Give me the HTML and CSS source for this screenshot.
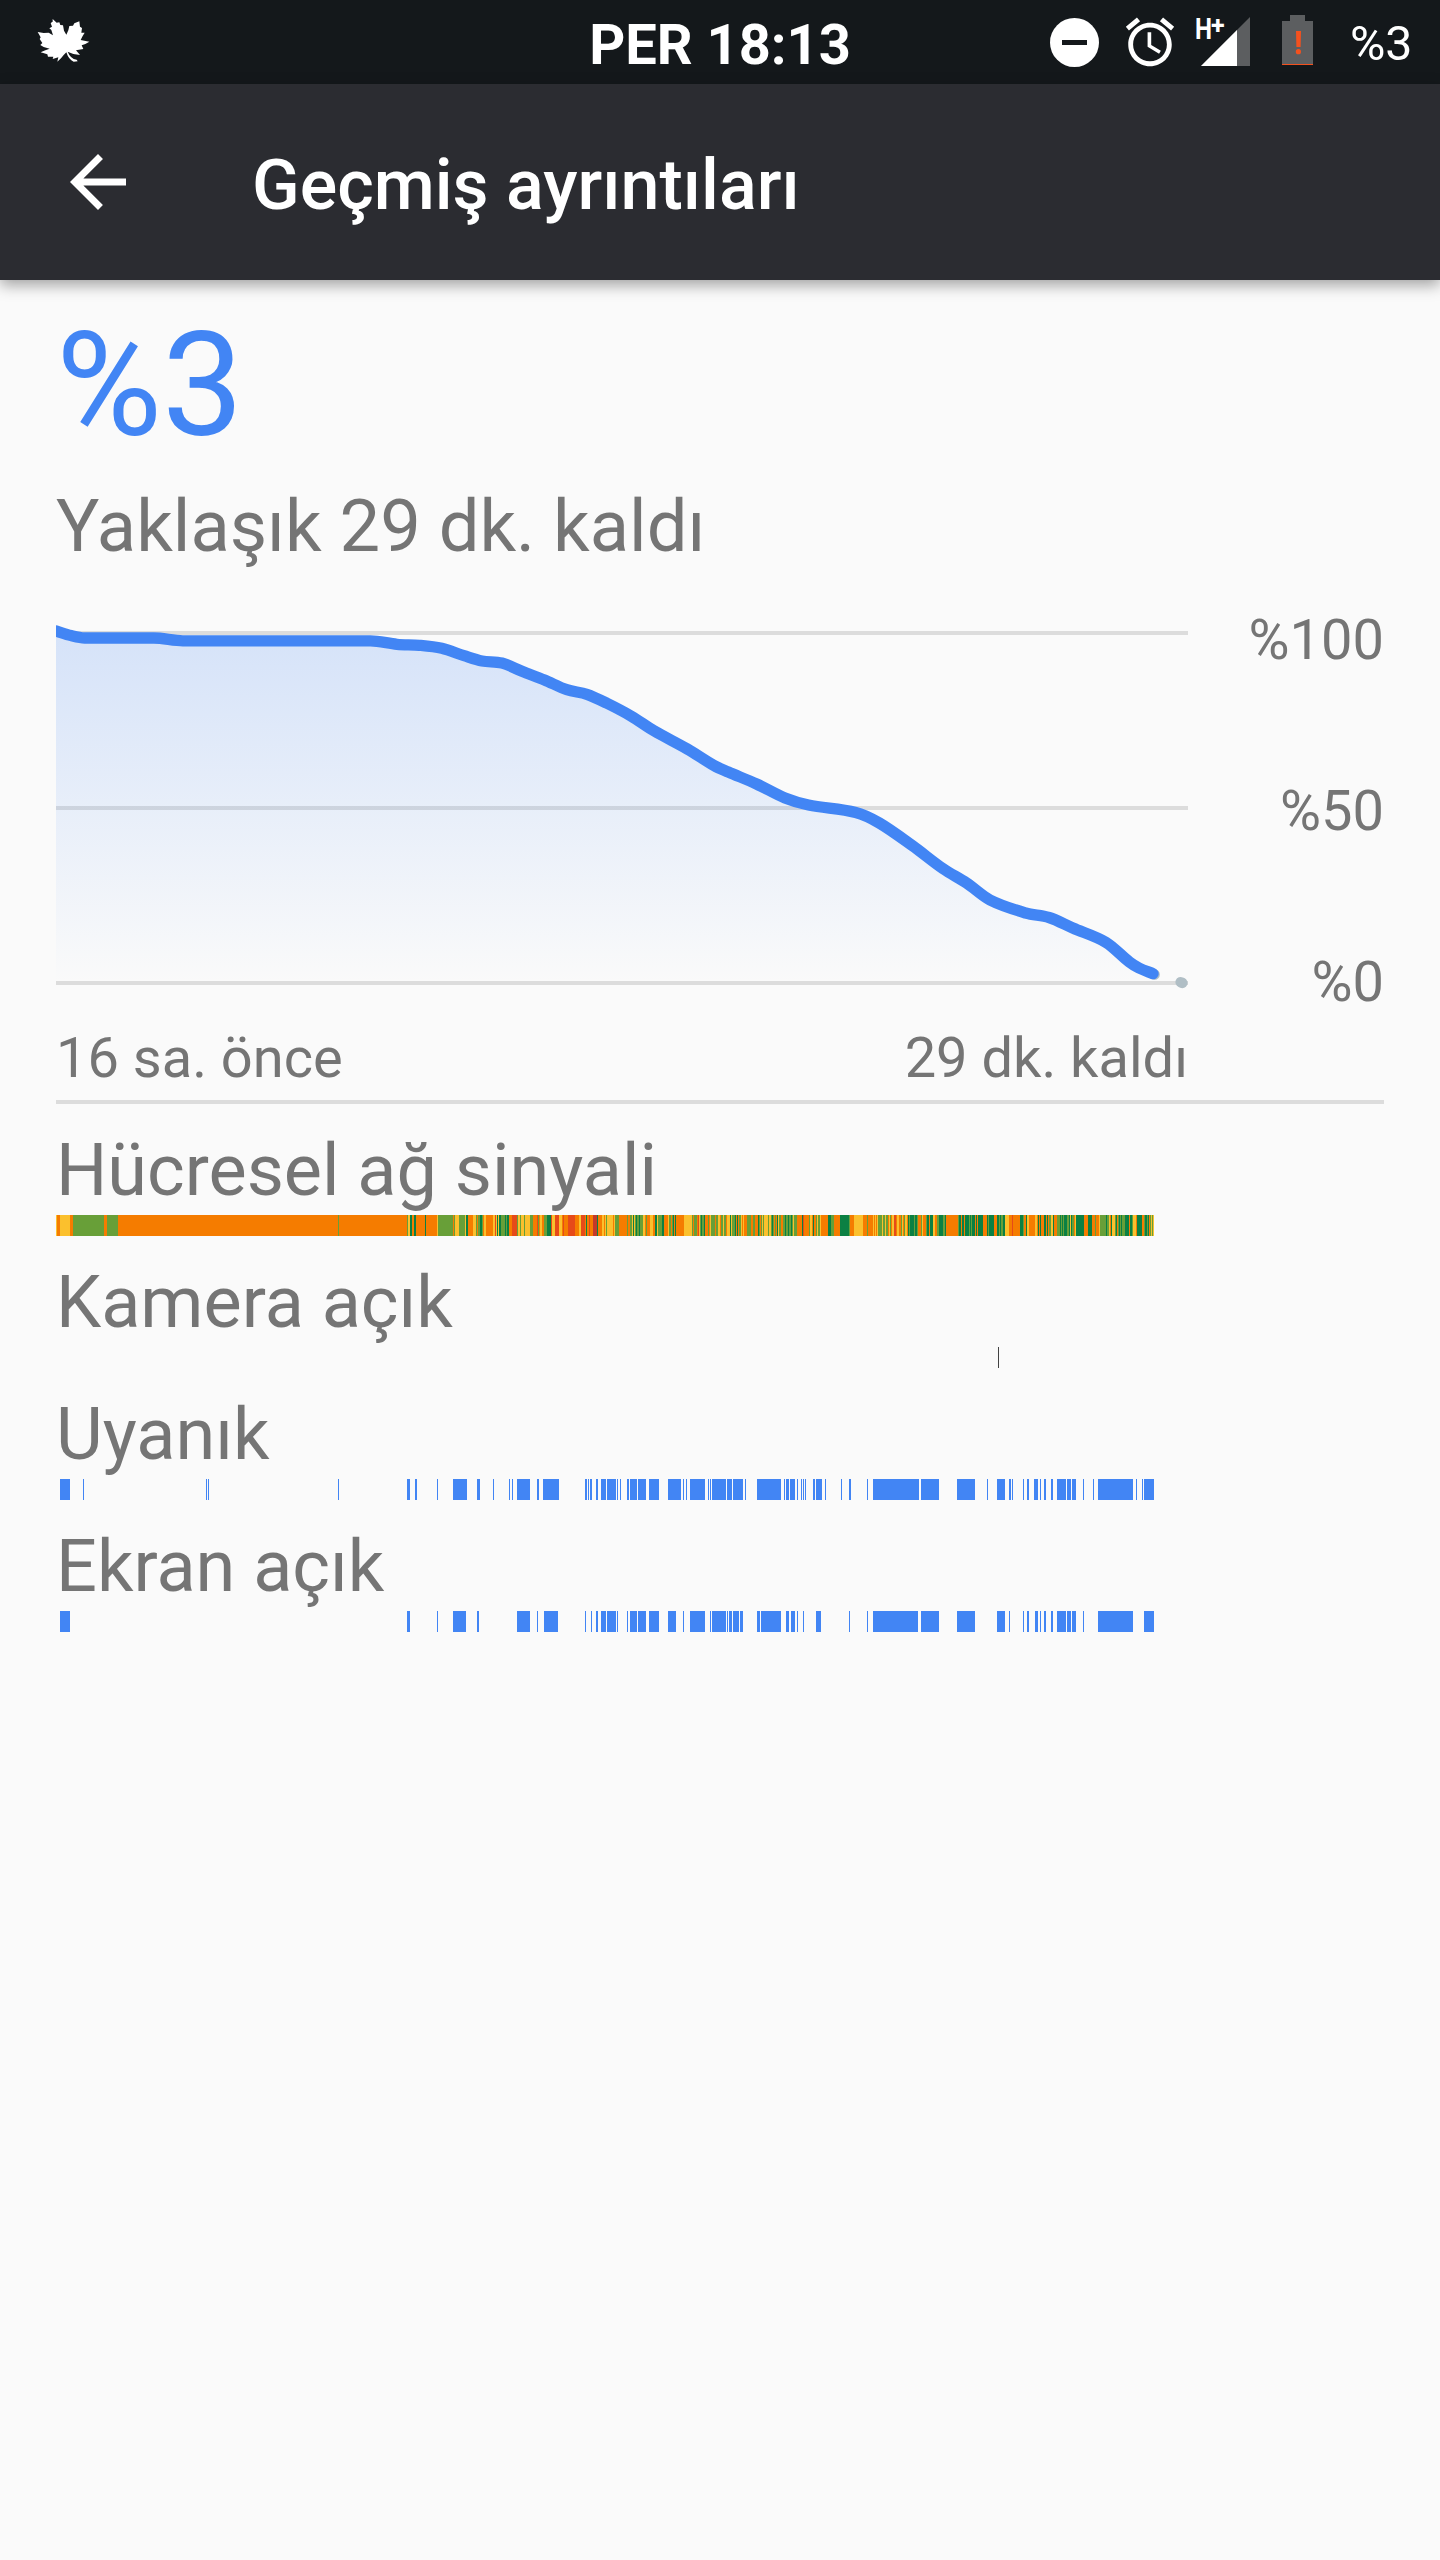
FILE: index.html
```html
<!DOCTYPE html>
<html lang="tr">
<head>
  <meta charset="UTF-8">
  <meta name="viewport" content="width=device-width, initial-scale=1.0">
  <title>Geçmiş ayrıntıları</title>
  <link rel="stylesheet" href="styles.css">
</head>
<body>
  <div class="status-bar">
    <div class="status-left">
      <svg class="leaf" viewBox="105 50 168 150" width="56" height="50">
        <path fill="#fff" d="M158 56l12 11 8-1 3 8 8 1 3 16 7 12 6-13 3-13 11-1 4-7 15-6 2 16 6 4-2 14 10 0-6 10-6 12 26 5-12 7-11 4 5 11-22 4 12 14-20-3-17-7q8 21 27 24l3 5-12 1q-15-6-22-28l-8 8-8 10-11 10 3-13-17 5 2-7-16 0-2-7-20-6 14-6 13-5-18-5-10-6 6-6-8-12 3-5-9-16 18 3 15-1 13 8-5-16-6-5 8-5-4-11 6-4z"/>
      </svg>
    </div>
    <div class="clock">PER 18:13</div>
    <div class="status-right">
      <svg class="dnd" viewBox="0 0 49 49" width="49" height="49">
        <circle cx="24.5" cy="24.5" r="24.5" fill="#fff"/>
        <rect x="12" y="22" width="25" height="5" fill="#14181b"/>
      </svg>
      <svg class="alarm" viewBox="0 0 24 24" width="58" height="58">
        <path fill="#fff" d="M22 5.72l-4.6-3.86-1.29 1.53 4.6 3.86L22 5.72zM7.88 3.39L6.6 1.86 2 5.71l1.29 1.53 4.59-3.85zM12.5 8H11v6l4.75 2.85.75-1.23-4-2.37V8zM12 4c-4.97 0-9 4.03-9 9s4.02 9 9 9c4.97 0 9-4.03 9-9s-4.03-9-9-9zm0 16c-3.87 0-7-3.13-7-7s3.13-7 7-7 7 3.13 7 7-3.13 7-7 7z"/>
      </svg>
      <svg class="signal" viewBox="0 0 56 66" width="56" height="66">
        <path fill="#5c5e60" d="M6 66L55 17v49z"/>
        <path fill="#fff" d="M6 66L42 30v36z"/>
        <text class="net" x="0" y="39" textLength="17" lengthAdjust="spacingAndGlyphs">H</text>
        <text class="net plus" x="16" y="34">+</text>
      </svg>
      <svg class="battery" viewBox="0 0 31 50" width="31" height="50">
        <path fill="#5c5e60" d="M8 0h15v6h8v44H0V6h8z"/>
        <path fill="#f4511e" d="M14 16h5l-.4 16h-4.2zM0 49h31v1H0z"/>
        <circle cx="16.4" cy="36.7" r="2.6" fill="#f4511e"/>
      </svg>
      <span class="level">%3</span>
    </div>
  </div>

  <div class="toolbar">
    <svg class="back" viewBox="0 0 24 24" width="84" height="84">
      <path fill="#fff" d="M20 11H7.83l5.59-5.59L12 4l-8 8 8 8 1.41-1.41L7.83 13H20v-2z"/>
    </svg>
    <h1>Geçmiş ayrıntıları</h1>
  </div>

  <div class="content">
    <div class="charge">%3</div>
    <div class="estimate">Yaklaşık 29 dk. kaldı</div>

    <div class="usage">
      <svg class="graph" viewBox="56 621 1132 374" width="1132" height="374">
        <defs>
          <linearGradient id="fill" gradientUnits="userSpaceOnUse" x1="0" y1="631" x2="0" y2="983">
            <stop offset="0" stop-color="#4285f4" stop-opacity="0.2"/>
            <stop offset="1" stop-color="#4285f4" stop-opacity="0"/>
          </linearGradient>
        </defs>
        <path fill="#dcdcdc" d="M56 631h1132v4H56zM56 806h1132v4H56zM56 981h1132v4H56z"/>
        <path id="area" fill="url(#fill)"/>
        <path class="projection" d="M1154.5 974.5h.1M1180.7 982.2l1.6.7"/>
        <path id="line" class="line"/>
      </svg>
      <div class="levels">
        <span>%100</span>
        <span>%50</span>
        <span>%0</span>
      </div>
    </div>
    <div class="times">
      <span>16 sa. önce</span>
      <span>29 dk. kaldı</span>
    </div>
    <div class="divider"></div>

    <div class="rows">
      <div class="row">
        <div class="label">Hücresel ağ sinyali</div>
        <svg class="strip" id="cell" viewBox="56 0 1132 21" width="1132" height="21"></svg>
      </div>
      <div class="row">
        <div class="label">Kamera açık</div>
        <svg class="strip" id="camera" viewBox="56 0 1132 21" width="1132" height="21"></svg>
      </div>
      <div class="row">
        <div class="label">Uyanık</div>
        <svg class="strip" id="awake" viewBox="56 0 1132 21" width="1132" height="21"></svg>
      </div>
      <div class="row">
        <div class="label">Ekran açık</div>
        <svg class="strip" id="screen" viewBox="56 0 1132 21" width="1132" height="21"></svg>
      </div>
    </div>
  </div>

  <script src="script.js"></script>
</body>
</html>
```
FILE: styles.css
```css
body {
  margin: 0;
  min-height: 2560px;
  background: #fafafa;
  color: #757575;
  font-family: Roboto, sans-serif;
}
svg {
  display: block;
  flex-shrink: 0;
}
.status-bar {
  display: grid;
  grid-template-columns: 1fr auto 1fr;
  height: 84px;
  background: #14181b;
  color: #fff;
}
.status-left {
  padding: 17px 0 0 35px;
}
.clock {
  padding-top: 6px;
  line-height: 78px;
  font-size: 56px;
  font-weight: bold;
}
.status-right {
  display: flex;
  justify-content: flex-end;
  align-items: flex-start;
  padding-right: 28px;
}
.dnd {
  margin-top: 18px;
}
.alarm {
  margin: 13px 0 0 22px;
}
.signal {
  margin: 0 0 0 16px;
  overflow: visible;
}
.net {
  fill: #fff;
  font-size: 29px;
  font-weight: bold;
}
.plus {
  font-size: 25px;
}
.battery {
  margin: 15px 0 0 31px;
}
.level {
  width: 62px;
  margin-left: 37px;
  padding-top: 3px;
  line-height: 81px;
  font-size: 48.3px;
}
.toolbar {
  position: relative;
  display: flex;
  align-items: center;
  gap: 112px;
  height: 196px;
  padding-left: 56px;
  background: #2b2c31;
  box-shadow: 0 5px 14px rgba(0, 0, 0, 0.36);
}
h1 {
  margin: 0;
  padding-top: 6px;
  color: #fff;
  font-size: 70px;
  font-weight: 500;
  line-height: 82px;
}
.content {
  padding: 20px 56px 0;
}
.charge {
  color: #4285f4;
  font-size: 144.9px;
  line-height: 171px;
}
.estimate {
  margin-top: 13px;
  font-size: 72.3px;
  line-height: 85px;
}
.usage {
  display: flex;
  justify-content: space-between;
  height: 408px;
  margin-top: 38px;
}
.graph {
  margin-top: 14px;
}
.line,
.projection {
  fill: none;
  stroke: #4285f4;
  stroke-width: 11.3;
  stroke-linecap: round;
  stroke-linejoin: round;
}
.projection {
  stroke: #b0bec5;
  stroke-width: 10.5;
}
.levels {
  display: flex;
  flex-direction: column;
  justify-content: space-between;
  text-align: right;
  font-size: 56px;
  line-height: 66px;
}
.times {
  display: flex;
  justify-content: space-between;
  width: 1132px;
  margin-top: 10px;
  font-size: 56px;
  line-height: 66px;
}
.divider {
  height: 4px;
  margin-top: 9px;
  background: #dcdcdc;
}
.rows {
  display: flex;
  flex-direction: column;
  gap: 24px;
  margin-top: 24px;
}
.label {
  font-size: 72px;
  line-height: 85px;
}
.strip {
  margin-top: 2px;
  shape-rendering: crispEdges;
}
```
FILE: script.js
```javascript
// battery level over time
const points = [
  [56, 631], [71, 635.6], [84.6, 638], [153.8, 638], [182.9, 640.8], [370.4, 640.8],
  [397, 644.3], [419.5, 645.3], [441.8, 648.3], [464, 655.7], [482, 661], [502, 663],
  [522, 671.3], [544.5, 680], [566.8, 689.7], [586.9, 694.3], [607, 703.3], [631.5, 716.3],
  [653.8, 730.7], [687.3, 749], [714, 765.5], [728.3, 772], [756.6, 784], [785, 798],
  [808.5, 805], [855.7, 812.5], [879.3, 823], [912.4, 845.7], [943, 868.7], [966.6, 883],
  [990, 900], [1025.6, 913], [1049, 917.5], [1072.8, 928], [1105.9, 942.3], [1129.4, 962],
  [1139, 968], [1153, 973.7]
];

// tangent at point i, level where the line runs flat on either side
function slope(p, i) {
  const a = p[Math.max(i - 1, 0)], b = p[i], c = p[Math.min(i + 1, p.length - 1)];
  if (i > 0 && i < p.length - 1 && (a[1] === b[1] || b[1] === c[1])) return 0;
  return (c[1] - a[1]) / (c[0] - a[0]);
}

function smooth(p) {
  let d = `M${p[0]}`;
  for (let i = 0; i < p.length - 1; i++) {
    const b = p[i], c = p[i + 1];
    const h = (c[0] - b[0]) / 3;
    d += `C${b[0] + h},${b[1] + slope(p, i) * h} ${c[0] - h},${c[1] - slope(p, i + 1) * h} ${c}`;
  }
  return d;
}

const curve = smooth(points);
document.getElementById("line").setAttribute("d", curve);
document.getElementById("area").setAttribute("d", curve + "V983H56Z");

// "start-end" spans
const awake = "60-70 83-84 206-207 208-209 338-339 407-410 415-417 437-438 453-467 477-480 493-494 509-510 512-513 517-530 537-539 543-559 585-587 588-589 590-592 596-598 601-606 607-616 617-618 620-621 627-629 630-637 638-646 649-659 668-681 683-684 686-687 690-705 708-709 710-711 712-726 727-732 733-743 745-746 757-781 784-785 786-789 790-795 797-798 801-802 803-804 805-806 813-815 816-822 825-826 841-842 849-851 867-868 873-919 921-939 957-975 987-988 997-1005 1009-1011 1012-1013 1023-1024 1027-1029 1034-1038 1040-1041 1044-1046 1051-1053 1057-1066 1067-1071 1072-1076 1083-1084 1093-1094 1098-1133 1136-1137 1142-1143 1144-1154";
const screenOn = "60-70 407-410 437-438 453-466 477-479 517-530 537-538 544-558 585-586 591-592 596-598 601-606 607-616 617-618 627-628 630-637 638-646 649-659 668-676 683-684 690-705 710-711 712-726 727-728 729-732 733-739 740-743 757-760 761-781 786-789 791-795 797-798 803-804 816-821 849-850 867-868 873-918 921-939 957-975 997-1005 1009-1010 1023-1024 1027-1029 1035-1038 1040-1041 1044-1046 1051-1053 1057-1066 1067-1071 1072-1076 1083-1084 1098-1133 1144-1154";

// signal level letter followed by the x where it ends
const cell = "y57 o60 y70 o73 g104 o107 g118 o338 g339 o407 g408 y410 d412 o414 d416 o425 d426 o437 y438 g453 o454 g455 y459 g465 y466 d468 o473 y476 g477 o478 g480 d482 g483 o484 y486 o493 y495 r496 y497 d498 y499 d501 g505 d506 g507 d509 o512 r517 g518 y520 g521 y524 g525 y530 g533 o537 r538 g539 o540 y542 o544 g547 d551 r552 y555 r559 y562 o563 r564 o568 r575 o579 y581 r585 o586 d587 o589 r590 o593 b597 d598 o602 y604 o605 y606 g607 y610 y613 o614 y615 g619 o627 g628 o630 g632 y633 d634 y635 g636 d637 g639 d640 g643 y645 o646 g647 o650 y653 o655 d657 y658 g662 d664 o668 y669 g671 o672 g673 d674 o675 d676 o684 y692 g693 o694 g697 o698 r699 y700 g701 d702 g704 d705 o708 g709 o710 y711 g715 o716 g718 y720 o721 g723 y724 g726 o727 y730 d731 y732 g735 d736 o737 d738 o739 g741 y742 o743 y744 o747 g751 o753 g755 o758 d759 g760 o761 g762 y763 g764 y768 g769 y771 g772 d773 g774 o775 g776 o777 d778 y779 g781 o783 g785 d786 g788 d789 g791 d792 g793 y794 g797 o802 d803 r804 o809 g810 y812 o813 d814 o816 g817 y818 g820 y821 o828 d831 g834 o840 d849 g850 o854 y863 o867 g868 o873 y874 o875 y876 o877 y878 g882 y883 g885 y886 g888 o889 y890 g891 o892 y894 r896 o897 y899 o901 g902 y903 o904 g905 y907 o908 d909 g910 d914 g915 d917 g918 o921 g922 y923 o926 g927 d929 o930 d933 y935 o937 g939 d943 g945 d946 o958 g959 d961 o962 d964 o965 d969 g970 d971 g972 d975 o976 d977 o978 d983 o987 d988 g989 d994 o997 d999 g1000 d1001 g1003 d1005 y1009 o1012 r1013 o1020 d1023 g1024 o1026 d1027 y1029 o1035 y1037 o1038 d1039 o1040 d1041 o1044 d1046 o1047 d1048 o1049 g1051 y1053 d1054 o1057 g1060 d1061 g1062 d1063 g1064 d1067 g1069 d1070 y1071 d1072 g1074 o1075 y1076 d1084 o1088 d1092 o1095 g1096 o1099 y1100 g1106 d1107 g1109 y1110 o1111 d1112 y1115 g1116 d1117 o1118 g1119 d1120 g1121 d1122 g1125 d1129 o1130 d1132 g1133 y1136 o1137 d1142 o1144 g1145 d1147 g1148 d1149 o1150 g1151 y1152 g1153 y1154";
const colors = { b: "#c53929", r: "#e64a19", o: "#f57c00", y: "#fbc02d", g: "#689f38", d: "#0b8043" };

function rect(x, end, color) {
  return `<rect x="${x}" y="0" width="${end - x}" height="21" fill="${color}"/>`;
}

function drawSpans(id, spans, color) {
  document.getElementById(id).innerHTML = spans.split(" ").map(s => {
    const [x, end] = s.split("-").map(Number);
    return rect(x, end, color);
  }).join("");
}

drawSpans("awake", awake, "#4285f4");
drawSpans("screen", screenOn, "#4285f4");
drawSpans("camera", "998-999", "#424242");

let x = 56;
document.getElementById("cell").innerHTML = cell.split(" ").map(s => {
  const end = Number(s.slice(1));
  const r = rect(x, end, colors[s[0]]);
  x = end;
  return r;
}).join("");
```
